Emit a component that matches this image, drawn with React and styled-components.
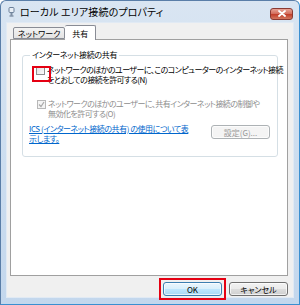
import styled, { createGlobalStyle } from "styled-components";

const GlobalStyle = createGlobalStyle`
    html, body {
        margin: 0;
        padding: 0;
        background: #ffffff;
    }
    body {
        font-family: "Noto Sans CJK JP", "Noto Sans", sans-serif;
        font-feature-settings: "palt";
    }
`;

const Window = styled.div`
    width: 300px;
    height: 305px;
    box-sizing: border-box;
    display: flex;
    flex-direction: column;
    background: linear-gradient(to bottom, #d9e5f2 0%, #cfdff0 40%, #c3d7ed 100%);
    border: 1px solid #5a7ea8;
    border-right-color: #3a8fd0;
    border-bottom-color: #3a8fd0;
    border-radius: 6px 6px 0 0;
    overflow: hidden;
`;

const TitleBar = styled.div`
    height: 21px;
    display: flex;
    align-items: center;
    padding: 0 6px 0 7px;
    flex-shrink: 0;
`;

const TitleText = styled.div`
    font-size: 10px;
    color: #000;
    margin-left: 5px;
    letter-spacing: 0.1px;
    flex: 1;
`;

const CloseButton = styled.div`
    width: 21px;
    height: 10px;
    margin-top: 4px;
    border: 1px solid #8a3a32;
    border-radius: 3px;
    background: linear-gradient(to bottom, #e8a496 0%, #d4705f 45%, #c2402c 55%, #d2775f 100%);
    display: flex;
    align-items: center;
    justify-content: center;
`;

const Client = styled.div`
    flex: 1;
    margin: 0 5px 6px 5px;
    background: #f0f0f0;
    border: 1px solid #e1eaf4;
    display: flex;
    flex-direction: column;
    padding: 1px 5px 0 3px;
`;

const TabStrip = styled.div`
    display: flex;
    align-items: flex-end;
    height: 15px;
    padding-left: 3px;
    position: relative;
    z-index: 1;
`;

const Tab = styled.div`
    box-sizing: border-box;
    height: ${p => (p.$active ? 15 : 12)}px;
    padding: 0 ${p => (p.$active ? 7 : 4)}px;
    margin-bottom: ${p => (p.$active ? -1 : 0)}px;
    display: flex;
    align-items: center;
    font-size: 8px;
    color: #000;
    background: ${p => (p.$active ? "#ffffff" : "linear-gradient(to bottom, #f3f3f3, #e3e3e3)")};
    border: 1px solid #898c95;
    border-bottom: ${p => (p.$active ? "none" : "1px solid #898c95")};
    border-left: ${p => (p.$active ? "none" : "1px solid #898c95")};
    border-radius: 2px 2px 0 0;
`;

const Panel = styled.div`
    height: 237px;
    box-sizing: border-box;
    background: #ffffff;
    border: 1px solid #a0a0a0;
    padding: 10px 9px 0 11px;
`;

const Group = styled.fieldset`
    margin: 0;
    padding: 0 7px 9px 6px;
    border: 1px solid #d5dfe5;
    border-radius: 3px;
    height: 96px;
    min-width: 0;
`;

const Legend = styled.legend`
    font-size: 8px;
    color: #000;
    padding: 0 2px;
    margin-left: 1px;
    line-height: 10px;
    letter-spacing: -0.3px;
`;

const OptionRow = styled.div`
    display: flex;
    align-items: flex-start;
    margin-top: ${p => p.$top}px;
    margin-left: ${p => p.$left || 0}px;
`;

const Highlight = styled.div`
    position: relative;
`;

const RedBox = styled.div`
    position: absolute;
    left: ${p => p.$l}px;
    top: ${p => p.$t}px;
    width: ${p => p.$w}px;
    height: ${p => p.$h}px;
    border: 2px solid #e50012;
    box-sizing: border-box;
    pointer-events: none;
`;

const Check = styled.div`
    width: 9px;
    height: 9px;
    box-sizing: border-box;
    border: 1px solid ${p => (p.$disabled ? "#b8b8b8" : "#8f8f8f")};
    background: ${p => (p.$disabled ? "#f4f4f4" : "linear-gradient(135deg, #e0e0e0, #fbfbfb)")};
    margin-top: 1px;
    flex-shrink: 0;
    display: flex;
    align-items: center;
    justify-content: center;
`;

const OptionText = styled.div`
    font-size: 8px;
    line-height: 10px;
    color: ${p => (p.$disabled ? "#8d8d8d" : "#000")};
    margin-left: 2px;
    letter-spacing: -0.55px;
    white-space: nowrap;
`;

const BottomRow = styled.div`
    display: flex;
    justify-content: space-between;
    align-items: flex-start;
    margin-top: 5px;
`;

const Link = styled.a`
    font-size: 8px;
    line-height: 10px;
    color: #0066cc;
    text-decoration: underline;
    letter-spacing: -0.45px;
    white-space: nowrap;
`;

const Button = styled.div`
    box-sizing: border-box;
    width: ${p => p.$w || 59}px;
    height: ${p => p.$h || 14}px;
    margin-top: ${p => p.$top || 0}px;
    display: flex;
    align-items: center;
    justify-content: center;
    font-size: 8px;
    color: ${p => (p.$disabled ? "#9a9a9a" : "#000")};
    border: 1px solid ${p => (p.$disabled ? "#adb2b5" : p.$default ? "#3c7fb1" : "#707070")};
    border-radius: 3px;
    background: ${p =>
        p.$disabled
            ? "#f4f4f4"
            : p.$default
            ? "linear-gradient(to bottom, #eaf6fd 0%, #d9f0fc 48%, #bee6fd 52%, #a7d9f5 100%)"
            : "linear-gradient(to bottom, #f2f2f2 0%, #ebebeb 48%, #dddddd 52%, #cfcfcf 100%)"};
    box-shadow: inset 0 0 0 1px rgba(255, 255, 255, 0.7);
`;

const Footer = styled.div`
    display: flex;
    justify-content: flex-end;
    gap: 7px;
    padding-top: 6px;
`;

const TitleIcon = () => (
    <svg width="7" height="10" viewBox="0 0 7 10">
        <rect x="1" y="0.5" width="5" height="5" rx="1" fill="#e8eef5" stroke="#6a7f99" />
        <rect x="2.5" y="5.5" width="2" height="3" fill="#7d8ea3" />
        <rect x="1.5" y="8.5" width="4" height="1" fill="#5c6e85" />
    </svg>
);

const CloseX = () => (
    <svg width="8" height="7" viewBox="0 0 8 7">
        <path d="M1 1 L7 6 M7 1 L1 6" stroke="#ffffff" strokeWidth="1.8" strokeLinecap="round" />
    </svg>
);

const CheckMark = () => (
    <svg width="7" height="7" viewBox="0 0 7 7">
        <path d="M1 3.5 L3 5.5 L6 1" stroke="#a8a8a8" strokeWidth="1.2" fill="none" />
    </svg>
);

const App = () => {
    return <>
        <GlobalStyle />
        <Window>
            <TitleBar>
                <TitleIcon />
                <TitleText>ローカル エリア接続のプロパティ</TitleText>
                <CloseButton><CloseX /></CloseButton>
            </TitleBar>
            <Client>
                <TabStrip>
                    <Tab>ネットワーク</Tab>
                    <Tab $active>共有</Tab>
                </TabStrip>
                <Panel>
                    <Group>
                        <Legend>インターネット接続の共有</Legend>
                        <Highlight>
                            <RedBox $l={3} $t={1} $w={19} $h={16} />
                            <OptionRow $top={5} $left={7}>
                                <Check />
                                <OptionText>
                                    ネットワークのほかのユーザーに、このコンピューターのインターネット接続<br />
                                    をとおしての接続を許可する(N)
                                </OptionText>
                            </OptionRow>
                        </Highlight>
                        <OptionRow $top={14} $left={8}>
                            <Check $disabled><CheckMark /></Check>
                            <OptionText $disabled>
                                ネットワークのほかのユーザーに、共有インターネット接続の制御や<br />
                                無効化を許可する(O)
                            </OptionText>
                        </OptionRow>
                        <BottomRow>
                            <Link>ICS (インターネット接続の共有) の使用について表<br />示します。</Link>
                            <Button $disabled $top={1}>設定(G)...</Button>
                        </BottomRow>
                    </Group>
                </Panel>
                <Footer>
                    <Highlight>
                        <RedBox $l={-4} $t={-4} $w={67} $h={22} />
                        <Button $default>OK</Button>
                    </Highlight>
                    <Button>キャンセル</Button>
                </Footer>
            </Client>
        </Window>
    </>
}

export default App;
